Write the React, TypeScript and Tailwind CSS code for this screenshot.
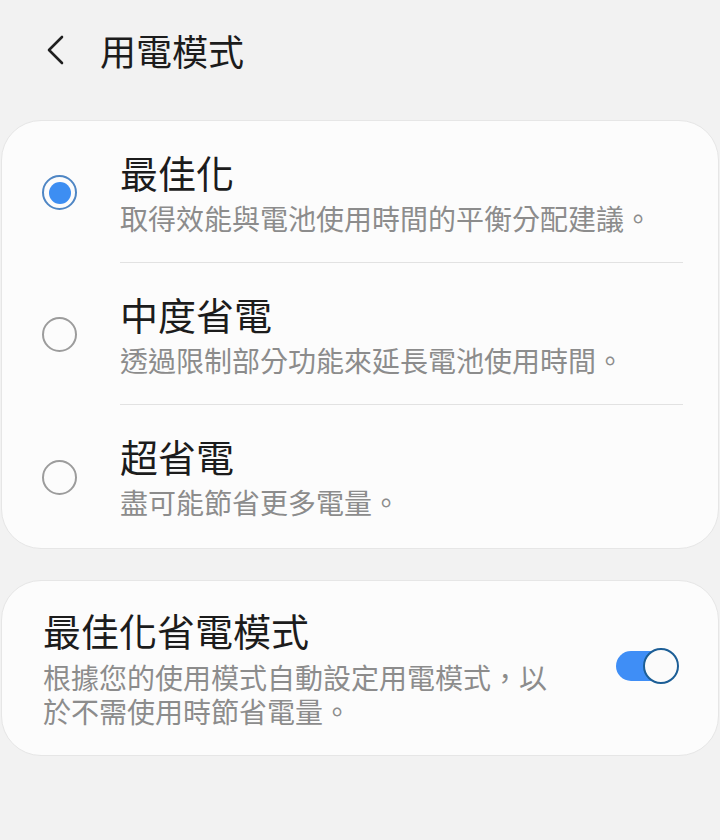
const font = { fontFamily: '"Noto Sans CJK TC", "Noto Sans", sans-serif' };

const modes = [
  { title: "最佳化", desc: "取得效能與電池使用時間的平衡分配建議。", selected: true },
  { title: "中度省電", desc: "透過限制部分功能來延長電池使用時間。", selected: false },
  { title: "超省電", desc: "盡可能節省更多電量。", selected: false },
];

function Radio({ selected }: { selected: boolean }) {
  if (selected) {
    return (
      <div className="flex h-[35px] w-[35px] items-center justify-center rounded-full border-2 border-[#4f86c4]">
        <div className="h-[22px] w-[22px] rounded-full bg-[#3d8ef2]" />
      </div>
    );
  }
  return <div className="h-[35px] w-[35px] rounded-full border-2 border-[#9c9c9c]" />;
}

export default function App() {
  return (
    <div className="min-h-[840px] w-[720px] bg-[#f2f2f2]" style={font}>
      {/* Header */}
      <div className="flex h-[100px] items-center pl-[46px]">
        <svg width="18" height="30" viewBox="0 0 18 30" className="text-[#1f1f1f]">
          <path d="M16 2 L3 15 L16 28" fill="none" stroke="currentColor" strokeWidth="2.6" strokeLinecap="round" strokeLinejoin="round" />
        </svg>
        <h1 className="ml-[36px] text-[36px] leading-[48px] text-[#1c1c1c]">用電模式</h1>
      </div>

      {/* Mode list */}
      <div className="mx-px mt-[20px] rounded-[40px] border border-[#e6e6e6] bg-[#fcfcfc]">
        {modes.map((m, i) => (
          <div key={m.title} className="flex">
            <div className="flex w-[118px] shrink-0 items-center pl-[40px] pt-px">
              <Radio selected={m.selected} />
            </div>
            <div className="flex-1 pr-[35px]">
              <div
                className={
                  i < modes.length - 1
                    ? "border-b border-[#e2e2e2] pt-[27px] pb-[24px]"
                    : "pt-[27px] pb-[26px]"
                }
              >
                <div className="text-[38px] leading-[48px] text-[#1c1c1c]">{m.title}</div>
                <div className="mt-[2px] text-[28px] leading-[40px] text-[#8c8c8c]">{m.desc}</div>
              </div>
            </div>
          </div>
        ))}
      </div>

      {/* Adaptive power saving */}
      <div className="mx-px mt-[31px] flex items-center rounded-[40px] border border-[#e6e6e6] bg-[#fcfcfc] pt-[25px] pb-[27px] pl-[41px] pr-[39px]">
        <div className="w-[520px]">
          <div className="text-[38px] leading-[48px] text-[#1c1c1c]">最佳化省電模式</div>
          <div className="mt-[6px] text-[28px] leading-[34px] text-[#8c8c8c]">
            根據您的使用模式自動設定用電模式，以於不需使用時節省電量。
          </div>
        </div>
        <div className="flex-1" />
        <div className="relative -mt-[3px] h-[36px] w-[63px]">
          <div className="absolute left-0 top-[3px] h-[30px] w-[56px] rounded-full bg-[#3f8ef6]" />
          <div className="absolute right-0 top-0 h-[36px] w-[36px] rounded-full border-2 border-[#1c5e96] bg-[#fbfbfb]" />
        </div>
      </div>
    </div>
  );
}
